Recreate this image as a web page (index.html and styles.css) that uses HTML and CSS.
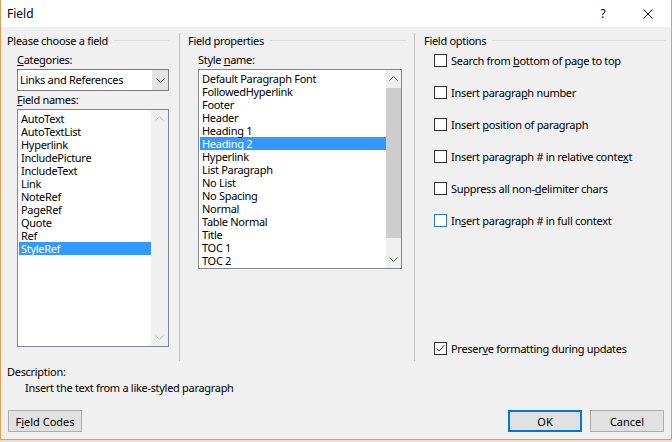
FILE: index.html
```html
<!DOCTYPE html>
<html>
<head>
<meta charset="utf-8">
<link rel="stylesheet" href="styles.css">
</head>
<body>
<div class="window">
  <div class="titlebar">
    <span class="title">Field</span>
    <span class="tb-btn help">?</span>
    <span class="tb-btn close"><svg width="10" height="10" viewBox="0 0 10 10"><path d="M0.5 0.5 L9.5 9.5 M9.5 0.5 L0.5 9.5" stroke="#111" stroke-width="1" fill="none"/></svg></span>
  </div>
  <div class="columns">
    <section class="col col-a">
      <div class="group-title">Please choose a field</div>
      <div class="indent">
        <div class="label first"><u>C</u>ategories:</div>
        <div class="combo">
          <span class="combo-text">Links and References</span>
          <span class="combo-btn"><svg width="9" height="5" viewBox="0 0 9 5"><polyline points="0.5,0.5 4.5,4.5 8.5,0.5" fill="none" stroke="#555"/></svg></span>
        </div>
        <div class="label"><u>F</u>ield names:</div>
        <div class="listbox lb-fields">
          <ul class="items">
            <li>AutoText</li>
            <li>AutoTextList</li>
            <li>Hyperlink</li>
            <li>IncludePicture</li>
            <li>IncludeText</li>
            <li>Link</li>
            <li>NoteRef</li>
            <li>PageRef</li>
            <li>Quote</li>
            <li>Ref</li>
            <li class="sel">StyleRef</li>
          </ul>
          <div class="vscroll">
            <div class="arrow"><svg width="9" height="5" viewBox="0 0 9 5"><polyline points="0.5,4.5 4.5,0.5 8.5,4.5" fill="none" stroke="#c2c2c2"/></svg></div>
            <div class="spacer"></div>
            <div class="arrow"><svg width="9" height="5" viewBox="0 0 9 5"><polyline points="0.5,0.5 4.5,4.5 8.5,0.5" fill="none" stroke="#c2c2c2"/></svg></div>
          </div>
        </div>
      </div>
    </section>
    <section class="col col-b">
      <div class="group-title">Field properties</div>
      <div class="indent">
        <div class="label first">Style <u>n</u>ame:</div>
        <div class="listbox lb-styles">
          <ul class="items">
            <li>Default Paragraph Font</li>
            <li>FollowedHyperlink</li>
            <li>Footer</li>
            <li>Header</li>
            <li>Heading 1</li>
            <li class="sel">Heading 2</li>
            <li>Hyperlink</li>
            <li>List Paragraph</li>
            <li>No List</li>
            <li>No Spacing</li>
            <li>Normal</li>
            <li>Table Normal</li>
            <li>Title</li>
            <li>TOC 1</li>
            <li>TOC 2</li>
          </ul>
          <div class="vscroll">
            <div class="arrow"><svg width="9" height="5" viewBox="0 0 9 5"><polyline points="0.5,4.5 4.5,0.5 8.5,4.5" fill="none" stroke="#606060"/></svg></div>
            <div class="thumb"></div>
            <div class="spacer"></div>
            <div class="arrow"><svg width="9" height="5" viewBox="0 0 9 5"><polyline points="0.5,0.5 4.5,4.5 8.5,0.5" fill="none" stroke="#606060"/></svg></div>
          </div>
        </div>
      </div>
    </section>
    <section class="col col-c">
      <div class="group-title">Field options</div>
      <div class="options">
        <div class="opt"><span class="cb"></span><span>Search from <u>b</u>ottom of page to top</span></div>
        <div class="opt"><span class="cb"></span><span>Insert paragra<u>p</u>h number</span></div>
        <div class="opt"><span class="cb"></span><span>Insert <u>p</u>osition of paragraph</span></div>
        <div class="opt"><span class="cb"></span><span>Insert paragraph # in relative conte<u>x</u>t</span></div>
        <div class="opt"><span class="cb"></span><span>Suppress all non-<u>d</u>elimiter chars</span></div>
        <div class="opt"><span class="cb focus"></span><span>In<u>s</u>ert paragraph # in full context</span></div>
        <div class="opt last"><span class="cb"><svg width="11" height="11" viewBox="0 0 11 11"><polyline points="1.5,5.5 4,8 9.5,2" fill="none" stroke="#333" stroke-width="1"/></svg></span><span>Preser<u>v</u>e formatting during updates</span></div>
      </div>
    </section>
  </div>
  <div class="desc">
    <div class="desc-label">Description:</div>
    <div class="desc-text">Insert the text from a like-styled paragraph</div>
  </div>
  <div class="footer">
    <button class="btn">F<u>i</u>eld Codes</button>
    <button class="btn default ok">OK</button>
    <button class="btn">Cancel</button>
  </div>
</div>
</body>
</html>
```
FILE: styles.css
```css
* { box-sizing: border-box; }
html { background: #f6dcc0; }
body {
  margin: 0;
  font-family: "Noto Sans", "Open Sans", sans-serif;
  font-size: 11px;
  letter-spacing: -0.3px;
  color: #000;
}
u { text-underline-offset: 1px; }
.window {
  width: 672px;
  height: 440px;
  background: #f0f0f0;
  border-left: 1px solid #e59d55;
  border-right: 1px solid #e59d55;
  border-bottom: 1px solid #e59d55;
  display: flex;
  flex-direction: column;
}
.titlebar {
  height: 27px;
  flex: none;
  background: #fff;
  display: flex;
  align-items: center;
}
.title { flex: 1; padding-left: 6px; font-size: 12px; letter-spacing: 0; }
.tb-btn {
  width: 46px;
  height: 27px;
  display: flex;
  align-items: center;
  justify-content: center;
}
.help { padding-left: 2px; font-size: 12px; }

.columns {
  display: flex;
  height: 334px;
  flex: none;
  padding-top: 6px;
}
.col {
  display: flex;
  flex-direction: column;
  border-right: 1px solid #c4c4c4;
}
.col-a { width: 179px; padding: 0 10px 0 6px; }
.col-b { width: 235px; padding: 0 8px 0 8px; }
.col-c { flex: 1; padding: 0 5px 0 9px; border-right: none; }

.group-title {
  display: flex;
  align-items: center;
  height: 15px;
  line-height: 15px;
  white-space: nowrap;
}
.group-title::after {
  content: "";
  flex: 1;
  height: 1px;
  background: #dcdcdc;
  margin-left: 6px;
}
.indent { margin-left: 10px; }
.label { line-height: 14px; margin-top: 2px; margin-bottom: 2px; }
.label.first { margin-top: 5px; }

.combo {
  height: 22px;
  border: 1px solid #7a7a7a;
  background: #fff;
  display: flex;
}
.combo-text { flex: 1; padding-left: 2px; line-height: 20px; }
.combo-btn {
  width: 16px;
  background: #e5e5e5;
  display: flex;
  align-items: center;
  justify-content: center;
}

.listbox {
  border: 1px solid #828790;
  background: #fff;
  display: flex;
}
.lb-fields { height: 238px; }
.lb-styles { height: 200px; width: 204px; }
.items {
  flex: 1;
  margin: 0;
  padding: 2px 0 0 1px;
  list-style: none;
  overflow: hidden;
}
.items li {
  height: 13px;
  line-height: 13px;
  padding-left: 2px;
  white-space: nowrap;
}
.items li.sel { background: #3399ff; color: #fff; }
.vscroll {
  width: 17px;
  background: #f0f0f0;
  display: flex;
  flex-direction: column;
}
.lb-styles .vscroll { width: 15px; }
.arrow {
  height: 17px;
  display: flex;
  align-items: center;
  justify-content: center;
}
.thumb {
  height: 150px;
  margin-top: 1px;
  background: #cdcdcd;
}
.spacer { flex: 1; }

.options {
  flex: 1;
  display: flex;
  flex-direction: column;
  padding: 5px 0 6px 10px;
}
.opt {
  display: flex;
  align-items: center;
  height: 14px;
  margin-bottom: 18px;
  white-space: nowrap;
}
.opt.last { margin-top: auto; margin-bottom: 0; }
.cb {
  width: 13px;
  height: 13px;
  flex: none;
  border: 1px solid #333;
  background: #fff;
  margin-right: 4px;
  display: flex;
}
.cb.focus { border-color: #2b7cd3; }

.desc { padding: 4px 0 0 6px; line-height: 14px; }
.desc-text { padding-left: 18px; margin-top: 2px; }

.footer {
  display: flex;
  padding: 15px 7px 0 7px;
  gap: 8px;
}
.btn {
  width: 74px;
  height: 22px;
  padding: 0;
  border: 1px solid #adadad;
  background: #e1e1e1;
  font: inherit;
  color: #000;
  display: flex;
  align-items: center;
  justify-content: center;
}
.btn.ok { margin-left: auto; }
.btn.default {
  border-color: #0078d7;
  box-shadow: inset 0 0 0 1px #0078d7;
}
```
